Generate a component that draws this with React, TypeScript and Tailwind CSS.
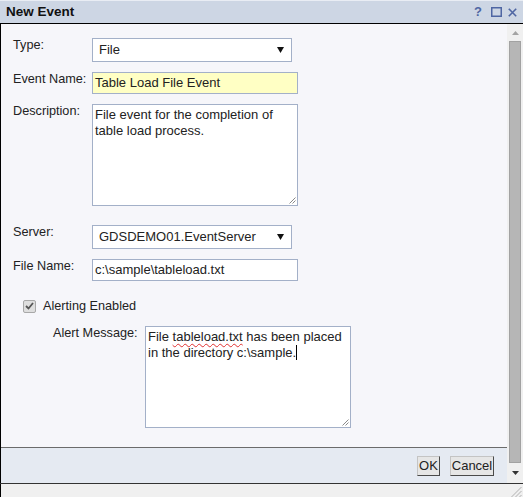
import React from "react";

const Arrow = () => (
  <svg width="7" height="6" viewBox="0 0 7 6" className="block">
    <path d="M0 0 H7 L3.5 6 Z" fill="#111" />
  </svg>
);

const Grip = () => (
  <svg width="8" height="8" viewBox="0 0 8 8" className="absolute right-[1px] bottom-[1px]">
    <path d="M7.5 1.5 L1.5 7.5 M7.5 4.5 L4.5 7.5" stroke="#8a8a8a" strokeWidth="1" />
  </svg>
);

function Select({ value, w }: { value: string; w: string }) {
  return (
    <div className={`${w} h-[24px] bg-white border border-[#a3b0c8] flex items-center justify-between pl-[6px] pr-[7px] text-[13px] text-[#222]`}>
      <span>{value}</span>
      <Arrow />
    </div>
  );
}

function Label({ children }: { children: React.ReactNode }) {
  return <div className="w-[79px] shrink-0 text-[12.7px] leading-[16px] text-[#222] mt-[-1px]">{children}</div>;
}

export default function App() {
  return (
    <div className="w-[523px] h-[497px] flex flex-col bg-[#f0f0f0] overflow-hidden font-['Liberation_Sans',Arial,sans-serif]">
      {/* Title bar */}
      <div className="h-[24px] shrink-0 bg-[#cdd6e4] border-t border-t-[#e9edf4] border-b border-b-black flex items-center pl-[6px] pr-[6px]">
        <div className="text-[13.5px] font-bold text-[#111] leading-[16px]">New Event</div>
        <div className="ml-auto flex items-center">
          <span className="text-[13px] font-bold text-[#4f66a3] leading-[16px]">?</span>
          <svg width="11" height="10" viewBox="0 0 11 10" className="ml-[9px]">
            <rect x="0.75" y="0.75" width="9.5" height="8.5" fill="none" stroke="#4f66a3" strokeWidth="1.5" />
          </svg>
          <svg width="9" height="9" viewBox="0 0 9 9" className="ml-[6px]">
            <path d="M0.8 0.8 L8.2 8.2 M8.2 0.8 L0.8 8.2" stroke="#4f66a3" strokeWidth="1.6" />
          </svg>
        </div>
      </div>

      {/* Middle */}
      <div className="h-[460px] shrink-0 flex border-b border-b-[#333]">
        <div className="flex-1 flex flex-col border-l border-l-black">
          {/* Body */}
          <div className="flex-1 bg-[#f6f6fa] pt-[14px] pl-[12px]">
            <div className="flex items-start">
              <Label>Type:</Label>
              <Select value="File" w="w-[200px]" />
            </div>
            <div className="flex items-start mt-[10px]">
              <Label>Event Name:</Label>
              <div className="w-[206px] h-[22px] bg-[#ffffc4] border border-[#a3b0c8] flex items-center pl-[2px] text-[13px] text-[#222]">
                Table Load File Event
              </div>
            </div>
            <div className="flex items-start mt-[10px]">
              <Label>Description:</Label>
              <div className="relative w-[206px] h-[102px] bg-white border border-[#a3b0c8] px-[2px] pt-[2px] text-[13px] leading-[16px] text-[#222]">
                File event for the completion of
                <br />
                table load process.
                <Grip />
              </div>
            </div>
            <div className="flex items-start mt-[19px]">
              <Label>Server:</Label>
              <Select value="GDSDEMO01.EventServer" w="w-[200px]" />
            </div>
            <div className="flex items-start mt-[10px]">
              <Label>File Name:</Label>
              <div className="w-[206px] h-[22px] bg-white border border-[#a3b0c8] flex items-center pl-[2px] text-[13px] text-[#222]">
                c:\sample\tableload.txt
              </div>
            </div>
            <div className="flex items-center h-[16px] mt-[17px] ml-[10px]">
              <div className="w-[13px] h-[13px] bg-[#dedede] border border-[#a8a8a8] rounded-[2px] flex items-center justify-center">
                <svg width="9" height="8" viewBox="0 0 9 8">
                  <path d="M1 4 L3.5 6.5 L8 1" fill="none" stroke="#555" strokeWidth="1.8" />
                </svg>
              </div>
              <span className="ml-[7px] text-[12.7px] text-[#222] leading-[16px]">Alerting Enabled</span>
            </div>
            <div className="flex items-start mt-[12px] ml-[40px]">
              <div className="w-[92px] shrink-0 text-[12.7px] leading-[16px] text-[#222] mt-[-1px]">Alert Message:</div>
              <div className="relative w-[206px] h-[102px] bg-white border border-[#a3b0c8] px-[2px] pt-[2px] text-[13px] leading-[16px] text-[#222]">
                File{" "}
                <span className="underline decoration-wavy decoration-[#e03030] decoration-[1px] underline-offset-[2px]">tableload.txt</span>{" "}
                has been placed
                <br />
                in the directory c:\sample.
                <span className="inline-block w-[1px] h-[15px] bg-black align-[-3px]" />
                <Grip />
              </div>
            </div>
          </div>
          {/* Footer */}
          <div className="h-[36px] shrink-0 bg-[#e5eaf2] border-t border-t-[#6b6b6b] flex items-center justify-end pr-[13px]">
            <div className="w-[23px] h-[20px] bg-[#e6e6e6] border border-t-[#c4c4c4] border-l-[#c4c4c4] border-r-[#4a4a4a] border-b-[#4a4a4a] flex items-center justify-center text-[13px] text-[#222]">
              OK
            </div>
            <div className="ml-[10px] w-[44px] h-[20px] bg-[#e6e6e6] border border-t-[#c4c4c4] border-l-[#c4c4c4] border-r-[#4a4a4a] border-b-[#4a4a4a] flex items-center justify-center text-[13px] text-[#222]">
              Cancel
            </div>
          </div>
        </div>
        {/* Scrollbar */}
        <div className="w-[16px] shrink-0 bg-[#f0f0f0] flex flex-col">
          <div className="h-[17px] flex items-center justify-center">
            <svg width="7" height="4" viewBox="0 0 7 4">
              <path d="M0 4 L3.5 0 L7 4 Z" fill="#a3a3a3" />
            </svg>
          </div>
          <div className="h-[422px] ml-[2px] w-[12px] bg-[#b6b6b6] border border-[#a2a2a2]" />
          <div className="flex-1 flex items-center justify-center">
            <svg width="7" height="4" viewBox="0 0 7 4">
              <path d="M0 0 L7 0 L3.5 4 Z" fill="#333" />
            </svg>
          </div>
        </div>
      </div>

      {/* Bottom strip */}
      <div className="flex-1 relative border-l border-l-black">
        <svg width="12" height="11" viewBox="0 0 12 11" className="absolute right-[1px] bottom-[0px]">
          <path d="M11.5 1 L1.5 11 M11.5 5 L5.5 11 M11.5 9 L9.5 11" stroke="#b0b0b0" strokeWidth="1" />
        </svg>
      </div>
    </div>
  );
}
